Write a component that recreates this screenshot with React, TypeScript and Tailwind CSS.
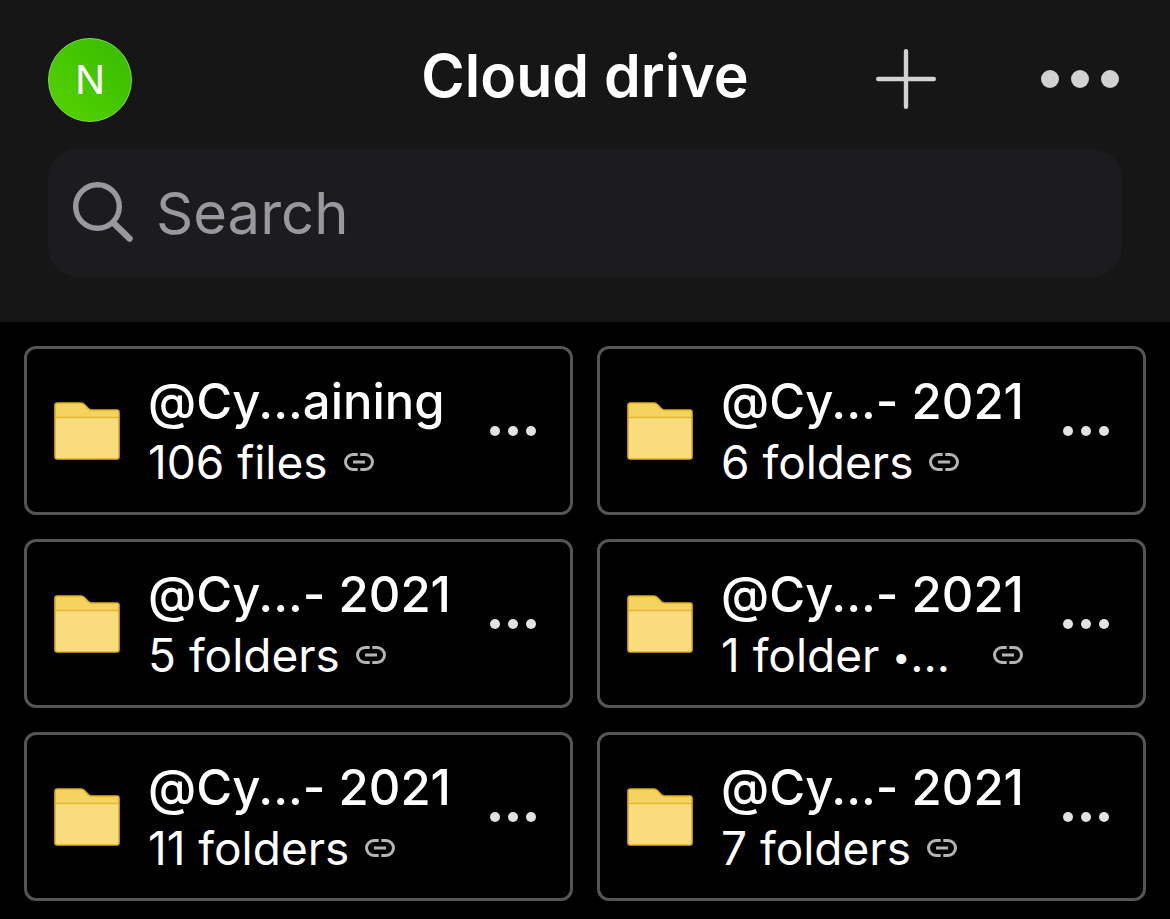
type Folder = {
  name: string;
  detail: string;
  clipped?: boolean;
};

const folders: Folder[] = [
  { name: "@Cy...aining", detail: "106 files" },
  { name: "@Cy...- 2021", detail: "6 folders" },
  { name: "@Cy...- 2021", detail: "5 folders" },
  { name: "@Cy...- 2021", detail: "1 folder ", clipped: true },
  { name: "@Cy...- 2021", detail: "11 folders" },
  { name: "@Cy...- 2021", detail: "7 folders" },
];

function PlusIcon() {
  return (
    <svg width="60" height="60" viewBox="0 0 60 60" fill="none" stroke="#d2d2d2" strokeWidth="4.4" strokeLinecap="round" aria-hidden="true">
      <path d="M30 2.2v55.6M2.2 30h55.6" />
    </svg>
  );
}

function SearchIcon() {
  return (
    <svg className="shrink-0" width="62" height="62" viewBox="0 0 62 62" fill="none" stroke="#98989f" aria-hidden="true">
      <circle cx="25.500" cy="24.500" r="21.800" strokeWidth="5.400" />
      <path d="M41.500 41 57.500 56.500" strokeWidth="6.600" strokeLinecap="round" />
    </svg>
  );
}

function FolderIcon() {
  return (
    <svg className="shrink-0" width="66" height="58" viewBox="0 0 66 58" aria-hidden="true">
      <path
        d="M1 3.200A2.200 2.200 0 0 1 3.200 1H26.800A5 5 0 0 1 30.300 2.500L34.300 6.600A5 5 0 0 0 37.900 8H62.800A2.200 2.200 0 0 1 65 10.200V54.800A2.200 2.200 0 0 1 62.800 57H3.200A2.200 2.200 0 0 1 1 54.800Z"
        fill="#f4d360"
      />
      <path d="M1 15.500H65V54.800A2.200 2.200 0 0 1 62.800 57H3.200A2.200 2.200 0 0 1 1 54.800Z" fill="#f8dc7e" />
      <path d="M1 15.500H65" stroke="#e4b72c" strokeWidth="1.500" />
      <path
        d="M1 3.200A2.200 2.200 0 0 1 3.200 1H26.800A5 5 0 0 1 30.300 2.500L34.300 6.600A5 5 0 0 0 37.900 8H62.800A2.200 2.200 0 0 1 65 10.200V54.800A2.200 2.200 0 0 1 62.800 57H3.200A2.200 2.200 0 0 1 1 54.800Z"
        fill="none"
        stroke="#deae1c"
        strokeWidth="1.600"
      />
    </svg>
  );
}

function LinkIcon() {
  return (
    <svg className="shrink-0" width="30" height="18" viewBox="0 0 30 18" fill="none" stroke="#b4b4b4" strokeWidth="3" aria-hidden="true">
      <path d="M13.700 1.500H9a7.500 7.500 0 0 0 0 15h4.700M16.300 1.500H21a7.500 7.500 0 0 1 0 15h-4.700M9 9h12" />
    </svg>
  );
}

function FolderCard({ name, detail, clipped }: Folder) {
  return (
    <li className="flex h-[169px] items-center rounded-xl border-3 border-[#555557] pl-[27px]">
      <FolderIcon />
      <div className="ml-7 min-w-0 flex-1 pt-[3px] whitespace-nowrap">
        <h2 className="text-[49px] leading-[60px] font-medium">{name}</h2>
        <p className="flex items-center gap-4 text-[46px] leading-[60px]">
          <span className={clipped ? "flex-1" : ""}>
            {detail}
            {clipped && (
              <>
                <span className="align-[4px] text-[32px] leading-none">•</span>...
              </>
            )}
          </span>
          <LinkIcon />
        </p>
      </div>
      <button type="button" aria-label={"More options for " + name} className="flex h-full w-30 shrink-0 items-center pl-10">
        <svg width="46" height="10" viewBox="0 0 46 10" fill="#e2e2e2" aria-hidden="true">
          <circle cx="5" cy="5" r="5" />
          <circle cx="23" cy="5" r="5" />
          <circle cx="41" cy="5" r="5" />
        </svg>
      </button>
    </li>
  );
}

export default function App() {
  return (
    <div className="min-h-screen bg-black font-['Inter',sans-serif] text-white [font-feature-settings:'calt'_0]">
      <header className="bg-[#161616] px-12 pt-[38px] pb-[45px]">
        <div className="grid grid-cols-[1fr_auto_1fr] items-start">
          <button
            type="button"
            aria-label="Account"
            className="size-[84px] rounded-full border border-[#7fdc5c] bg-linear-to-tr from-[#55d400] to-[#35bb00] text-[40px] leading-none"
          >
            N
          </button>
          <h1 className="text-[59px] leading-[76px] font-semibold whitespace-nowrap">Cloud drive</h1>
          <div className="flex justify-end gap-[90px]">
            <button type="button" aria-label="Add" className="flex h-[82px] w-[84px] items-center justify-center">
              <PlusIcon />
            </button>
            <button type="button" aria-label="More" className="flex h-[82px] w-[84px] items-center justify-center">
              <svg width="78" height="18" viewBox="0 0 78 18" fill="#d2d2d2" aria-hidden="true">
                <circle cx="9" cy="9" r="9" />
                <circle cx="39" cy="9" r="9" />
                <circle cx="69" cy="9" r="9" />
              </svg>
            </button>
          </div>
        </div>
        <label className="mt-[27px] flex h-32 items-center gap-[22px] rounded-[30px] bg-[#1c1c1e] px-6">
          <SearchIcon />
          <input
            type="text"
            aria-label="Search"
            placeholder="Search"
            className="h-full min-w-0 flex-1 bg-transparent text-[58px] outline-none placeholder:text-[#98989f]"
          />
        </label>
      </header>
      <main className="p-6 pb-0">
        <ul className="grid grid-cols-2 gap-6">
          {folders.map((folder, i) => (
            <FolderCard key={i} {...folder} />
          ))}
        </ul>
      </main>
    </div>
  );
}
